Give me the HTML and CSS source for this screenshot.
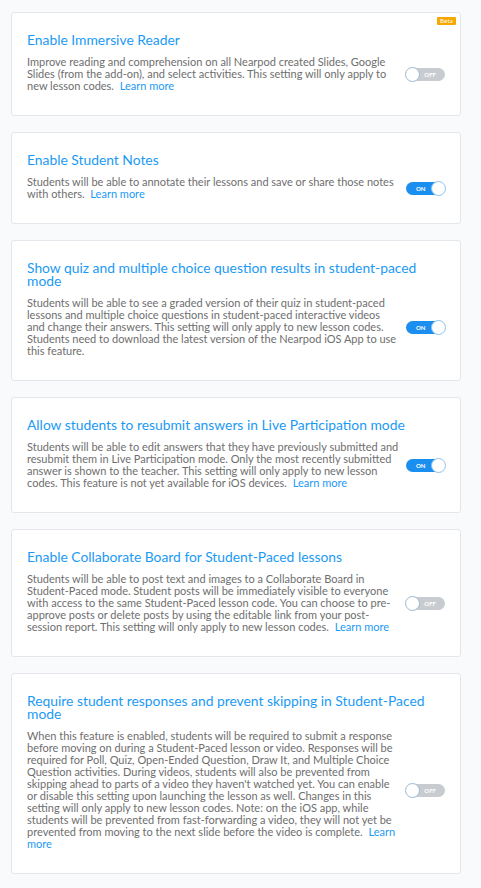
FILE: index.html
```html
<!DOCTYPE html>
<html>
<head>
<meta charset="utf-8">
<link rel="stylesheet" href="styles.css">
</head>
<body>
<div class="list">
  <section class="card">
    <span class="badge">Beta</span>
    <h2 class="title">Enable Immersive Reader</h2>
    <div class="row">
      <p class="desc">Improve reading and comprehension on all Nearpod created Slides, Google Slides (from the add-on), and select activities. This setting will only apply to new lesson codes. <a class="link">Learn more</a></p>
      <div class="toggle off"><span class="lbl">OFF</span><span class="knob"></span></div>
    </div>
  </section>

  <section class="card">
    <h2 class="title">Enable Student Notes</h2>
    <div class="row">
      <p class="desc">Students will be able to annotate their lessons and save or share those notes with others. <a class="link">Learn more</a></p>
      <div class="toggle on"><span class="lbl">ON</span><span class="knob"></span></div>
    </div>
  </section>

  <section class="card">
    <h2 class="title">Show quiz and multiple choice question results in student-paced mode</h2>
    <div class="row">
      <p class="desc">Students will be able to see a graded version of their quiz in student-paced lessons and multiple choice questions in student-paced interactive videos and change their answers. This setting will only apply to new lesson codes. Students need to download the latest version of the Nearpod iOS App to use this feature.</p>
      <div class="toggle on"><span class="lbl">ON</span><span class="knob"></span></div>
    </div>
  </section>

  <section class="card">
    <h2 class="title">Allow students to resubmit answers in Live Participation mode</h2>
    <div class="row">
      <p class="desc">Students will be able to edit answers that they have previously submitted and resubmit them in Live Participation mode. Only the most recently submitted answer is shown to the teacher. This setting will only apply to new lesson codes. This feature is not yet available for iOS devices. <a class="link">Learn more</a></p>
      <div class="toggle on"><span class="lbl">ON</span><span class="knob"></span></div>
    </div>
  </section>

  <section class="card">
    <h2 class="title">Enable Collaborate Board for Student-Paced lessons</h2>
    <div class="row">
      <p class="desc">Students will be able to post text and images to a Collaborate Board in Student-Paced mode. Student posts will be immediately visible to everyone with access to the same Student-Paced lesson code. You can choose to pre-approve posts or delete posts by using the editable link from your post-session report. This setting will only apply to new lesson codes. <a class="link">Learn more</a></p>
      <div class="toggle off"><span class="lbl">OFF</span><span class="knob"></span></div>
    </div>
  </section>

  <section class="card">
    <h2 class="title">Require student responses and prevent skipping in Student-Paced mode</h2>
    <div class="row">
      <p class="desc">When this feature is enabled, students will be required to submit a response before moving on during a Student-Paced lesson or video. Responses will be required for Poll, Quiz, Open-Ended Question, Draw It, and Multiple Choice Question activities. During videos, students will also be prevented from skipping ahead to parts of a video they haven't watched yet. You can enable or disable this setting upon launching the lesson as well. Changes in this setting will only apply to new lesson codes. Note: on the iOS app, while students will be prevented from fast-forwarding a video, they will not yet be prevented from moving to the next slide before the video is complete. <a class="link">Learn more</a></p>
      <div class="toggle off"><span class="lbl">OFF</span><span class="knob"></span></div>
    </div>
  </section>
</div>
</body>
</html>
```

FILE: styles.css
```css
html, body {
  margin: 0;
  padding: 0;
  background: #f9fafc;
}
body {
  font-family: Lato, "Noto Sans", sans-serif;
  color: #6e6e6e;
}
.list {
  display: flex;
  flex-direction: column;
  gap: 16px;
  padding: 11.5px 20px 11px 11px;
}
.card {
  position: relative;
  background: #ffffff;
  border: 1px solid #e3e6ea;
  border-radius: 3px;
  padding: 20px 15px 22.5px 15px;
}
.badge {
  position: absolute;
  top: 4px;
  right: 4px;
  background: #f7a800;
  color: #ffffff;
  font-size: 6px;
  line-height: 8px;
  padding: 0 3px;
  border-radius: 1px;
  letter-spacing: 0.2px;
}
.title {
  margin: 0 0 10.5px 0;
  font-size: 13.85px;
  line-height: 13px;
  font-weight: 400;
  color: #1b9af5;
}
.row {
  display: flex;
  align-items: center;
  gap: 6px;
}
.desc {
  margin: 0;
  flex: 1;
  font-size: 11px;
  line-height: 12px;
  color: #6e6e6e;
}
.link {
  margin-left: 3px;
  color: #1b9af5;
  text-decoration: none;
}
.toggle {
  position: relative;
  flex: none;
  width: 39px;
  height: 13px;
  border-radius: 7px;
  margin-top: 1px;
  display: flex;
  align-items: center;
  font-size: 6px;
  font-weight: 700;
  color: #ffffff;
  box-sizing: border-box;
}
.toggle.off {
  background: #c8ccd0;
  justify-content: flex-end;
  padding-right: 9px;
}
.toggle.on {
  background: #1b8ff0;
  justify-content: flex-start;
  padding-left: 10px;
}
.knob {
  position: absolute;
  top: -1px;
  width: 13px;
  height: 13px;
  border-radius: 50%;
  background: #ffffff;
  border: 1px solid #9db8cf;
}
.toggle.off .knob { left: -1px; }
.toggle.on .knob { right: -1px; border-color: #8fc3ee; }
```
